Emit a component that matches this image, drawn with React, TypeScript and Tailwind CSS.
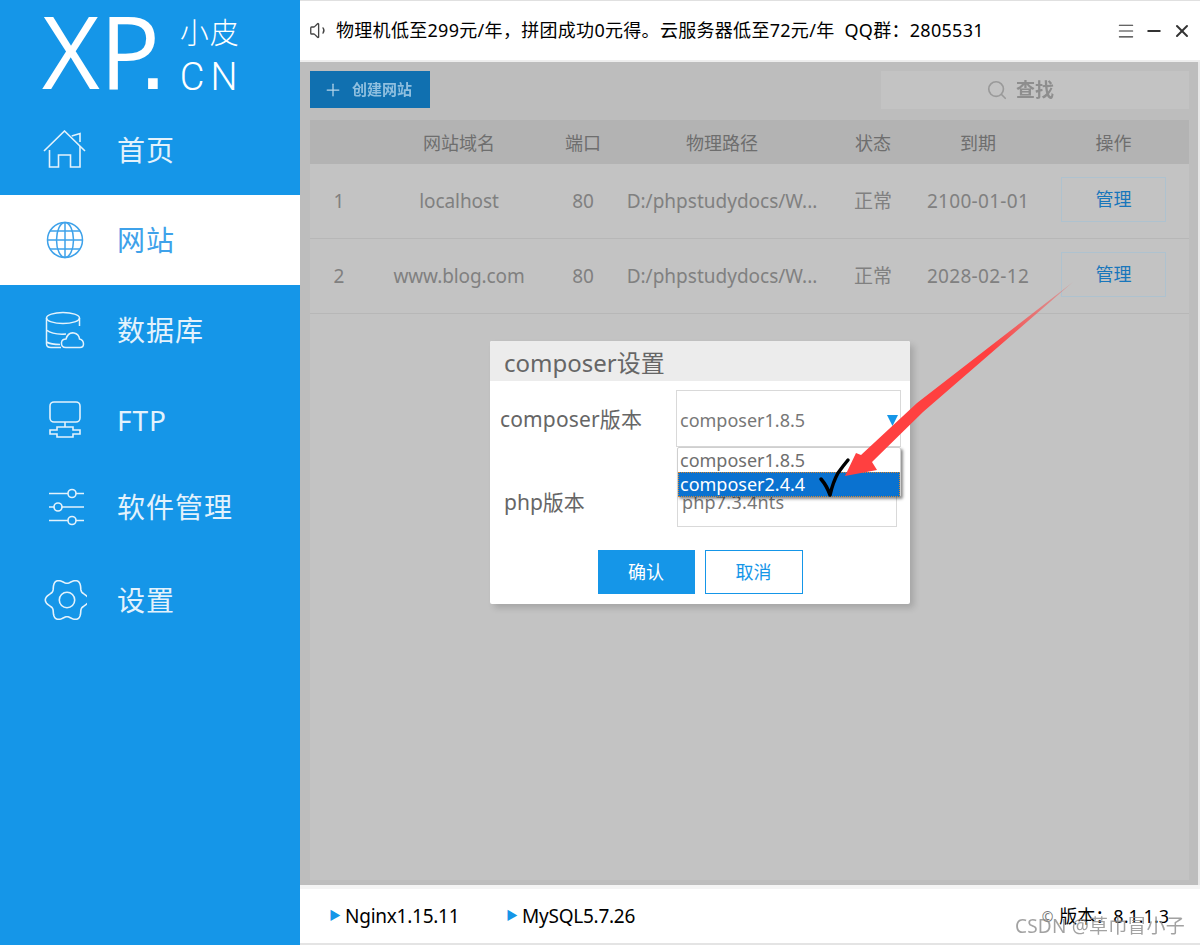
import { Menu, Minus, X, Search, Plus, Volume1 } from 'lucide-react'

const FONT = "font-['Noto_Sans','Noto_Sans_CJK_SC',sans-serif]"

// six lobed outline, same shape as the app's settings glyph
const gearPoints = Array.from({ length: 120 }, (_, i) => {
  const a = (i / 120) * Math.PI * 2
  const r = 19.2 + 2.5 * Math.cos(6 * a)
  return `${(24 + r * Math.cos(a)).toFixed(2)},${(20 + r * Math.sin(a)).toFixed(2)}`
}).join(' ')

function HomeIcon() {
  return (
    <svg width="44" height="40" viewBox="0 0 44 40" fill="none" stroke="currentColor" strokeWidth="1.6">
      <path d="M1 21 L21.5 1 L42 21" />
      <path d="M28.7 6 L37 3.5 V12" />
      <path d="M6.5 20 V37 H15.5 V25 H27.5 V37 H37 V16" />
    </svg>
  )
}

function GlobeIcon() {
  return (
    <svg width="38" height="38" viewBox="0 0 38 38" fill="none" stroke="currentColor" strokeWidth="1.5">
      <circle cx="19" cy="19" r="17.5" />
      <ellipse cx="19" cy="19" rx="8.5" ry="17.5" />
      <path d="M19 1.5 V36.5 M1.5 19 H36.5 M4 10 H34 M4 28 H34" />
    </svg>
  )
}

function DbIcon() {
  return (
    <svg width="40" height="38" viewBox="0 0 40 38" fill="none" stroke="currentColor" strokeWidth="1.5">
      <ellipse cx="18" cy="7" rx="16.5" ry="5.5" />
      <path d="M1.5 7 V33 Q1.5 36.5 6 36.5 H16 M34.5 7 V15 M1.5 19 Q8 24 21 23 M1.5 31 Q6 33.5 15 33.5" />
      <path d="M21 36.5 Q16 36.5 16.5 31.5 Q17 28 21 28 Q23 21 29 22 Q34 23 34.5 28 Q38.5 29 38.5 33 Q38.5 36.5 35 36.5 Z" />
    </svg>
  )
}

function FtpIcon() {
  return (
    <svg width="34" height="38" viewBox="0 0 34 38" fill="none" stroke="currentColor" strokeWidth="1.6">
      <rect x="2" y="1" width="30" height="20" rx="4" />
      <path d="M17 21 V26" />
      <path d="M9 26 H25 V29 H32 V33 H25 V36 H9 V33 H2 V29 H9 Z" />
    </svg>
  )
}

function SlidersIcon() {
  return (
    <svg width="38" height="38" viewBox="0 0 38 38" fill="none" stroke="currentColor" strokeWidth="1.6">
      <path d="M3 5.5 H22 M30 5.5 H38 M3 19 H8 M16 19 H38 M3 32.5 H22 M30 32.5 H38" />
      <circle cx="26" cy="5.5" r="4" />
      <circle cx="12" cy="19" r="4" />
      <circle cx="26" cy="32.5" r="4" />
    </svg>
  )
}

function GearIcon() {
  return (
    <svg width="44" height="40" viewBox="0 0 44 40" fill="none" stroke="currentColor" strokeWidth="1.6">
      <polygon points={gearPoints} />
      <circle cx="24" cy="20" r="7.7" />
    </svg>
  )
}

const navItems = [
  { label: '首页', icon: <HomeIcon />, h: 'h-[90px]' },
  { label: '网站', icon: <GlobeIcon />, h: 'h-[90px]', active: true },
  { label: '数据库', icon: <DbIcon />, h: 'h-[90px]' },
  { label: 'FTP', icon: <FtpIcon />, h: 'h-[90px]' },
  { label: '软件管理', icon: <SlidersIcon />, h: 'h-[84px]' },
  { label: '设置', icon: <GearIcon />, h: 'h-[102px]' },
]

function Sidebar() {
  return (
    <aside className="w-[300px] h-full bg-[#1596e8] shrink-0 text-white">
      <div className="h-[105px] pl-[42px] flex items-start">
        <div className="font-['Open_Sans',sans-serif] text-[100px] leading-[100px] whitespace-nowrap">
          XP<span className="font-['Liberation_Sans',sans-serif] -ml-[21px]">.</span>
        </div>
        <div className="ml-[13px] mt-[15px] flex flex-col">
          <span className="text-[29px] leading-[36px] tracking-[1px] font-light">小皮</span>
          <span className="font-['Roboto',sans-serif] font-light text-[38px] leading-[38px] tracking-[6px] mt-[7px]">CN</span>
        </div>
      </div>
      <nav>
        {navItems.map((n) => (
          <div key={n.label} className={`${n.h} flex items-center ${n.active ? 'bg-white text-[#3fa2ea]' : 'text-[#e3f2fc]'}`}>
            <div className="ml-[42px] w-[46px] mr-[29px] flex justify-center shrink-0">{n.icon}</div>
            <span className="text-[28px] leading-none tracking-[1px]">{n.label}</span>
          </div>
        ))}
      </nav>
    </aside>
  )
}

const cols = 'grid grid-cols-[58px_182px_66px_212px_90px_120px_151px] items-center text-center'

const rows = [
  { id: 1, host: 'localhost', port: 80, date: '2100-01-01' },
  { id: 2, host: 'www.blog.com', port: 80, date: '2028-02-12' },
]

function SiteTable() {
  return (
    <div className="w-[879px] bg-[#c3c3c3]">
      <div className={`${cols} h-[44px] bg-[#b3b3b3] text-[#6e6e6e] text-[18px] pt-[2px]`}>
        <span />
        <span>网站域名</span>
        <span>端口</span>
        <span>物理路径</span>
        <span>状态</span>
        <span>到期</span>
        <span>操作</span>
      </div>
      {rows.map((r) => (
        <div key={r.id} className={`${cols} h-[75px] border-b border-[#b7b7b7] text-[#808080] text-[19px]`}>
          <span>{r.id}</span>
          <span className="tracking-[-0.1px]">{r.host}</span>
          <span>{r.port}</span>
          <span>D:/phpstudydocs/W...</span>
          <span>正常</span>
          <span className="tracking-[0.3px]">{r.date}</span>
          <span className="flex justify-center pb-[3px]">
            <span className="w-[105px] h-[45px] border border-[#aec2cf] text-[#1876bb] text-[18px] flex items-center justify-center">管理</span>
          </span>
        </div>
      ))}
    </div>
  )
}

function Dialog() {
  return (
    <div className="absolute left-[490px] top-[341px] w-[420px] h-[263px] bg-white rounded-[2px] shadow-[4px_4px_6px_rgba(0,0,0,0.15)] text-[#666]">
      <div className="h-[40px] bg-[#ececec] pl-[14px] text-[24px] leading-[43px] text-[#666] rounded-t-[2px]">composer设置</div>

      <div className="flex items-center h-[57px] mt-[9px] pl-[10px]">
        <span className="w-[176px] text-[21px] tracking-[0.15px] text-[#666] pt-[2px]">composer版本</span>
        <div className="w-[225px] h-full border border-[#d9d9d9] flex items-center justify-between pl-[3px] pr-[2px] pt-[3px] text-[18px] text-[#777]">
          composer1.8.5
          <svg width="11" height="11" viewBox="0 0 11 11" className="mt-[1px]">
            <polygon points="0,0 11,0 5.5,11" fill="#1596e8" />
          </svg>
        </div>
      </div>

      <div className="flex items-center h-[32px] mt-[48px] pl-[14px]">
        <span className="w-[173px] text-[21px] text-[#666] -mt-[17px]">php版本</span>
        <div className="w-[220px] h-[32px] border border-[#d9d9d9] border-t-0 pl-[4px] text-[18px] leading-[14px] tracking-[0.2px] text-[#777]">php7.3.4nts</div>
      </div>

      <div className="flex justify-center gap-[10px] mt-[23px] text-[18px]">
        <button className="w-[97px] h-[44px] bg-[#1596e8] text-white">确认</button>
        <button className="w-[98px] h-[44px] border border-[#1596e8] text-[#1596e8] bg-white">取消</button>
      </div>

      {/* open select list sits over the php row */}
      <div className="absolute left-[187px] top-[106px] w-[224px] h-[50px] bg-white border border-[#cfcfcf] shadow-[2px_2px_3px_rgba(0,0,0,0.45)] text-[18px] rounded-[2px]">
        <div className="h-[24px] pl-[2px] leading-[24px] text-[#6e6e6e]">composer1.8.5</div>
        <div className="h-[25px] pl-[2px] leading-[24px] bg-[#0a72d0] text-white outline-1 outline-dotted outline-[#d9862b] -outline-offset-1">composer2.4.4</div>
      </div>
    </div>
  )
}

export default function App() {
  return (
    <div className={`${FONT} relative w-[1200px] h-[945px] flex overflow-hidden bg-white`}>
      <Sidebar />
      <main className="flex-1 flex flex-col min-w-0">
        <header className="h-[62px] shrink-0 bg-white border-t border-[#e0e0e0] border-b-2 border-b-[#ededed] flex items-center pl-[9px] pr-[8px] text-black text-[18px]">
          <Volume1 size={21} className="text-[#444] mr-[6px]" strokeWidth={1.5} />
          <span className="flex-1 whitespace-nowrap tracking-[0.3px]">物理机低至299元/年，拼团成功0元得。云服务器低至72元/年&nbsp;&nbsp;QQ群：2805531</span>
          <Menu size={20} strokeWidth={1.3} className="text-[#333] mr-[8px]" />
          <Minus size={20} strokeWidth={2.2} className="text-[#333] mr-[8px]" />
          <X size={20} strokeWidth={2.4} className="text-[#333]" />
        </header>

        <section className="flex-1 min-h-0 bg-[#bdbdbd] border-r-2 border-r-[#e8e8e8] pl-[10px] pt-[9px] pb-[5px] flex flex-col">
          <div className="flex justify-between w-[879px] h-[38px] mb-[11px]">
            <button className="w-[120px] h-[37px] bg-[#1070b0] flex items-center pl-[13px] gap-[9px] text-[#8fbfdf]">
              <Plus size={20} strokeWidth={1.5} className="text-[#b5d5ea]" />
              <span className="text-[15px] font-bold blur-[0.5px]">创建网站</span>
            </button>
            <div className="w-[308px] h-[38px] bg-[#c3c3c3] flex items-center justify-center gap-[8px] pr-[30px] text-[#8e8e8e]">
              <Search size={22} strokeWidth={1.8} className="text-[#9a9a9a]" />
              <span className="text-[19px] font-bold blur-[0.4px]">查找</span>
            </div>
          </div>
          <div className="flex-1 min-h-0 flex">
            <SiteTable />
          </div>
        </section>

        <footer className="h-[60px] shrink-0 bg-white border-t-[4px] border-t-[#f4f4f4] border-b-2 border-b-[#e4e4e4] flex items-center pl-[29px] pr-[31px] text-black text-[19px]">
          <span className="text-[#1596e8] text-[12px] mr-[4px]">▶</span>
          <span className="w-[161px] tracking-[-0.25px]">Nginx1.15.11</span>
          <span className="text-[#1596e8] text-[12px] mr-[4px]">▶</span>
          <span className="flex-1 tracking-[-0.25px]">MySQL5.7.26</span>
          <span className="text-[#777] text-[14px] mr-[6px]">©</span>
          <span className="text-[18px]">版本：8.1.1.3</span>
        </footer>
      </main>

      <Dialog />

      {/* screenshot annotations drawn on top */}
      <svg className="absolute left-0 top-0 pointer-events-none" width="1200" height="945" fill="none">
        <defs>
          <linearGradient id="arrowFade" x1="1073" y1="282" x2="990" y2="350" gradientUnits="userSpaceOnUse">
            <stop offset="0" stopColor="#ff4040" stopOpacity="0.25" />
            <stop offset="1" stopColor="#ff4040" />
          </linearGradient>
        </defs>
        <path d="M821 479 Q827 486 830 495 Q833 482 838 473 Q843 466 848 460" stroke="#000" strokeWidth="3.5" strokeLinecap="round" strokeLinejoin="round" />
        <polygon points="845,476 856,453 861,455 917,403 1073,282 923,412 872,462 877,470" fill="url(#arrowFade)" />
      </svg>

      <div className="absolute left-[1015px] top-[914px] text-[19px] leading-[24px] text-[#8c8c8c] opacity-80 tracking-[0.2px]">CSDN @草巾冒小子</div>
    </div>
  )
}
